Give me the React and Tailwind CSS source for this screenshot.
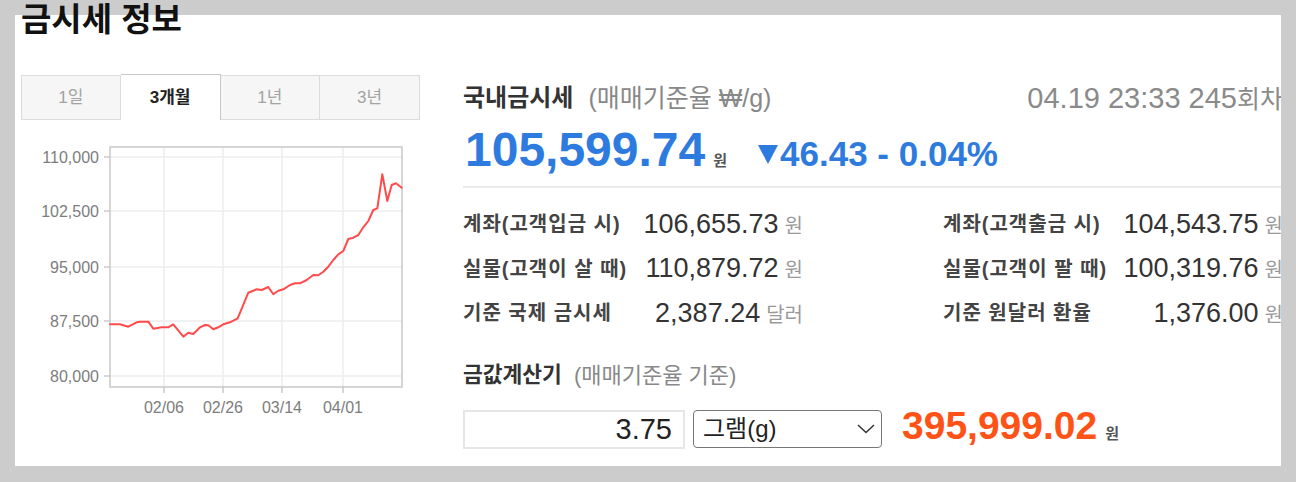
import React from "react";

const FONT = "font-['Liberation_Sans','Noto_Sans_CJK_KR',sans-serif]";

const linePoints = [
  [110, 324.3], [120, 324.3], [128.3, 326.7], [136.7, 322.3], [140, 321.7], [148.3, 321.7],
  [153.3, 328.7], [161.7, 327.3], [168.3, 327.3], [173.3, 324.3], [183.3, 336.7], [188.3, 332.7],
  [193.3, 334], [200, 327.3], [205, 325], [208.3, 325.3], [213.3, 329.3], [218.3, 327.3],
  [223.3, 324.3], [230, 322.3], [237.7, 318.3], [248.3, 292.7], [256.7, 289.3], [261.7, 290],
  [268.3, 287], [273.3, 294.3], [278.3, 290.7], [283.3, 289.3], [290, 285], [295, 283.3],
  [300, 283.3], [306.7, 280], [313.3, 275], [318.3, 275.3], [323.3, 271.7], [328.3, 266.7],
  [333.3, 260], [338.3, 254.3], [343.3, 251], [348.3, 239], [353.3, 237.7], [358.3, 235],
  [363.3, 227.3], [368.3, 221], [373.3, 210], [377.3, 208.3], [382.3, 174.3], [387.3, 201],
  [391.7, 185], [396, 183.3], [401.7, 187.7],
];

const yTicks = [
  ["110,000", 157],
  ["102,500", 211],
  ["95,000", 267],
  ["87,500", 321],
  ["80,000", 376],
];

const xTicks = [
  ["02/06", 164],
  ["02/26", 223],
  ["03/14", 282],
  ["04/01", 343],
];

const tabs = ["1일", "3개월", "1년", "3년"];

const rows = [
  ["계좌(고객입금 시)", "106,655.73", "원", "계좌(고객출금 시)", "104,543.75", "원"],
  ["실물(고객이 살 때)", "110,879.72", "원", "실물(고객이 팔 때)", "100,319.76", "원"],
  ["기준 국제 금시세", "2,387.24", "달러", "기준 원달러 환율", "1,376.00", "원"],
];

function PriceChart() {
  const d = "M" + linePoints.map((p) => p.join(",")).join(" L");
  return (
    <svg width="400" height="280" viewBox="21 140 400 280" className="block">
      {yTicks.map(([label, y]) => (
        <g key={label}>
          <line x1="110" x2="402" y1={y} y2={y} stroke="#ececec" strokeWidth="1.5" />
          <line x1="104" x2="110" y1={y} y2={y} stroke="#bdbdbd" strokeWidth="1.2" />
          <text x="99" y={y + 5.8} textAnchor="end" fontSize="16" fill="#7d7d7d" fontFamily="Liberation Sans">
            {label}
          </text>
        </g>
      ))}
      {xTicks.map(([label, x]) => (
        <g key={label}>
          <line x1={x} x2={x} y1="147" y2="387" stroke="#ececec" strokeWidth="1.5" />
          <line x1={x} x2={x} y1="387" y2="393" stroke="#bdbdbd" strokeWidth="1.2" />
          <text x={x} y="413" textAnchor="middle" fontSize="16" fill="#7d7d7d" fontFamily="Liberation Sans">
            {label}
          </text>
        </g>
      ))}
      <rect x="110" y="147" width="292" height="240" fill="none" stroke="#c9c9c9" strokeWidth="1.5" />
      <path d={d} fill="none" stroke="#ff4b4b" strokeWidth="2" strokeLinejoin="round" strokeLinecap="round" />
    </svg>
  );
}

export default function App() {
  return (
    <div className={`${FONT} h-[482px] w-[1296px] bg-[#cccccc] pt-[15px] pl-[15px]`}>
      <div className="flex h-[451px] w-[1266px] bg-white">
        {/* left: title + chart */}
        <div className="w-[448px] shrink-0 pl-[6px]">
          <h1 className="-mt-[12px] h-[33px] text-[33px] font-bold leading-[33px] text-[#111]">금시세 정보</h1>

          <div className="mt-[38px] flex h-[46px] w-[399px] items-end">
            {tabs.map((t, i) =>
              i === 1 ? (
                <div
                  key={t}
                  className="flex h-[46px] w-[100px] items-center justify-center border-t border-r border-[#c8c8c8] bg-white text-[17px] font-bold leading-none text-[#222]"
                >
                  {t}
                </div>
              ) : (
                <div
                  key={t}
                  className={`flex h-[45px] w-[100px] items-center justify-center border-y border-r border-[#dcdcdc] bg-[#f6f6f6] text-[17px] leading-none text-[#a3a3a3] ${
                    i === 0 ? "border-l" : ""
                  }`}
                >
                  {t}
                </div>
              )
            )}
          </div>

          <div className="mt-[20px]">
            <PriceChart />
          </div>
        </div>

        {/* right: price info */}
        <div className="w-[818px] overflow-hidden">
          <div className="w-[820px]">
            <div className="mt-[66px] flex h-[34px] items-center justify-between">
              <div className="flex items-center">
                <span className="text-[24px] font-bold leading-none text-[#333]">국내금시세</span>
                <span className="ml-[15px] text-[25px] leading-none text-[#888]">(매매기준율 ₩/g)</span>
              </div>
              <span className="text-[29px] leading-none text-[#8a8a8a]">
                04.19 23:33 245<span className="text-[25px]">회차</span>
              </span>
            </div>

            <div className="mt-[11px] flex h-[48px] items-baseline pl-[2px]">
              <span className="text-[48px] font-bold leading-none text-[#2e7be0]">105,599.74</span>
              <span className="ml-[8px] text-[15px] font-bold leading-none text-[#555]">원</span>
              <span className="ml-[31px] text-[35px] font-bold leading-none text-[#2e7be0]">
                <svg width="20" height="19" viewBox="0 0 20 19" className="mr-[2px] inline-block align-[2px]">
                  <polygon points="0,0 20,0 10,19" fill="#2e7be0" />
                </svg>
                46.43 - 0.04%
              </span>
            </div>

            <div className="mt-[12px] h-[2px] bg-[#ebebeb]" />

            <div className="mt-[14px] grid grid-cols-2 gap-x-[140px]">
              {rows.map((r) =>
                [0, 3].map((o) => (
                  <div key={r[o]} className="flex h-[44.5px] items-center justify-between">
                    <span className="text-[20px] font-bold leading-none tracking-[1px] text-[#444]">{r[o]}</span>
                    <span className="flex items-baseline">
                      <span className="text-[27px] leading-none text-[#333]">{r[o + 1]}</span>
                      <span className="ml-[6px] text-[20px] leading-none text-[#9a9a9a]">{r[o + 2]}</span>
                    </span>
                  </div>
                ))
              )}
            </div>

            <div className="mt-[25px] flex h-[30px] items-center">
              <span className="text-[21.5px] font-bold leading-none text-[#333]">금값계산기</span>
              <span className="ml-[12px] text-[22px] leading-none text-[#888]">(매매기준율 기준)</span>
            </div>

            <div className="mt-[19px] flex h-[39px] items-center">
              <div className="flex h-[39px] w-[222px] items-center justify-end border-2 border-[#e6e6e6] pr-[11px] text-[29px] leading-none text-[#222]">
                3.75
              </div>
              <div className="ml-[8px] flex h-[38px] w-[189px] items-center justify-between rounded-[4px] border-[1.5px] border-[#777] pl-[9px] pr-[6px]">
                <span className="text-[24px] leading-none text-[#222]">그램(g)</span>
                <svg width="18" height="10" viewBox="0 0 18 10">
                  <polyline points="1,1 9,8.5 17,1" fill="none" stroke="#333" strokeWidth="1.5" />
                </svg>
              </div>
              <div className="ml-[20px] flex items-baseline pb-[7px]">
                <span className="text-[39px] font-bold leading-none text-[#ff5217]">395,999.02</span>
                <span className="ml-[8px] text-[15px] font-bold leading-none text-[#555]">원</span>
              </div>
            </div>
          </div>
        </div>
      </div>
    </div>
  );
}
